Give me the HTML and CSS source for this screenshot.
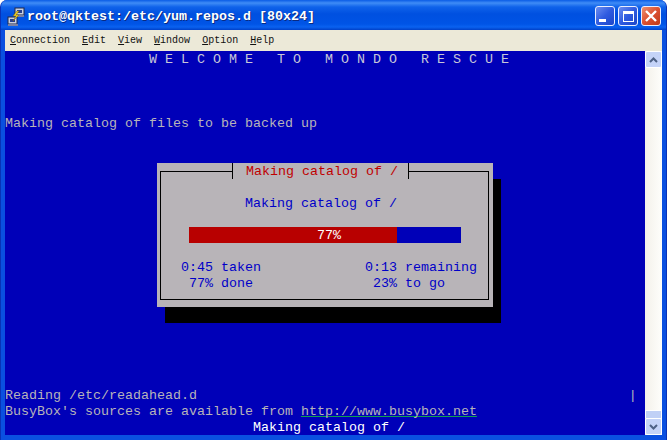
FILE: index.html
```html
<!DOCTYPE html>
<html lang="en">
<head>
<meta charset="utf-8">
<title>root@qktest:/etc/yum.repos.d [80x24]</title>
<link rel="stylesheet" href="styles.css">
</head>
<body>
<div class="window">
  <header class="titlebar">
    <svg class="app-icon" width="20" height="20" viewBox="0 0 20 20">
      <rect x="9" y="1" width="9" height="7" fill="#c8d0e0" stroke="#20284a"/>
      <rect x="11" y="3" width="5" height="3" fill="#28408c"/>
      <rect x="10" y="8" width="8" height="2" fill="#7a80a0"/>
      <rect x="2" y="10" width="9" height="7" fill="#c8d0e0" stroke="#20284a"/>
      <rect x="4" y="12" width="5" height="3" fill="#28408c"/>
      <rect x="2" y="17" width="10" height="2" fill="#7a80a0"/>
      <path d="M11 4 L7 9 L10 9 L7 14 L13 8 L10 8 L13 4 Z" fill="#f4d820" stroke="#806010" stroke-width="0.5"/>
    </svg>
    <span class="title">root@qktest:/etc/yum.repos.d [80x24]</span>
    <div class="controls">
      <div class="ctl"><span class="glyph-min"></span></div>
      <div class="ctl"><span class="glyph-max"></span></div>
      <div class="ctl ctl-close">
        <svg width="14" height="14" viewBox="0 0 14 14"><path d="M2 2 L12 12 M12 2 L2 12" stroke="#fff" stroke-width="2.4"/></svg>
      </div>
    </div>
  </header>
  <nav class="menubar">
    <span class="menu"><u>C</u>onnection</span>
    <span class="menu"><u>E</u>dit</span>
    <span class="menu"><u>V</u>iew</span>
    <span class="menu"><u>W</u>indow</span>
    <span class="menu"><u>O</u>ption</span>
    <span class="menu"><u>H</u>elp</span>
  </nav>
  <div class="client">
    <main class="terminal">
      <pre class="row row-head">                  W E L C O M E   T O   M O N D O   R E S C U E</pre>
      <pre class="row"> </pre>
      <pre class="row"> </pre>
      <pre class="row"> </pre>
      <pre class="row">Making catalog of files to be backed up</pre>
      <div class="spacer"></div>
      <pre class="row">Reading /etc/readahead.d                                                      |</pre>
      <pre class="row">BusyBox's sources are available from <span class="link">http://www.busybox.net</span></pre>
      <pre class="row row-status">                               Making catalog of /</pre>
      <div class="shadow"></div>
      <section class="dialog">
        <div class="frame"></div>
        <div class="title-row"><pre class="row">Making catalog of /</pre></div>
        <pre class="row"> </pre>
        <pre class="row dlg-text">           Making catalog of /</pre>
        <pre class="row"> </pre>
        <div class="bar"><div class="bar-fill" style="width:208px"></div><pre class="row bar-label">77%</pre></div>
        <pre class="row"> </pre>
        <pre class="row dlg-text">   0:45 taken             0:13 remaining</pre>
        <pre class="row dlg-text">    77% done               23% to go</pre>
      </section>
    </main>
    <aside class="scrollbar">
      <div class="sb-btn"><svg width="9" height="6" viewBox="0 0 9 6"><path d="M1 5 L4.5 1.5 L8 5" fill="none" stroke="#4d6185" stroke-width="2"/></svg></div>
      <div class="sb-track"></div>
      <div class="sb-thumb"></div>
      <div class="sb-btn"><svg width="9" height="6" viewBox="0 0 9 6"><path d="M1 1 L4.5 4.5 L8 1" fill="none" stroke="#4d6185" stroke-width="2"/></svg></div>
    </aside>
  </div>
</div>
</body>
</html>
```
FILE: styles.css
```css
html, body {
  margin: 0;
  padding: 0;
  background: #fff;
}

.window {
  width: 667px;
  height: 440px;
  display: flex;
  flex-direction: column;
  box-sizing: border-box;
  overflow: hidden;
  border-radius: 7px 7px 0 0;
  background: #0a50e0;
  padding: 0 5px 5px;
  border-left: 1px solid #0832b8;
  border-right: 1px solid #0832b8;
}

.titlebar {
  height: 30px;
  flex: none;
  margin: 0 -5px;
  padding: 0 5px;
  display: flex;
  align-items: center;
  box-sizing: border-box;
  background: linear-gradient(180deg, #0a5ce6 0, #3f8cf6 3px, #0f62ea 7px, #0050e0 14px, #0054e6 24px, #0a62f0 27px, #0040c8 30px);
}

.app-icon {
  flex: none;
  margin-top: 3px;
}

.title {
  margin-left: 1px;
  padding-top: 3px;
  font: bold 13.33px/16px "Liberation Mono", monospace;
  color: #fff;
  text-shadow: 1px 1px 0 #0a2a80;
  white-space: pre;
}

.controls {
  margin-left: auto;
  margin-top: 2px;
  display: flex;
  gap: 3px;
}

.ctl {
  width: 20px;
  height: 20px;
  box-sizing: border-box;
  border: 1px solid #e8eeff;
  border-radius: 3px;
  background: linear-gradient(135deg, #6c8ef0 0, #2f5be0 50%, #1c45c8 100%);
  display: flex;
  align-items: center;
  justify-content: center;
}

.ctl-close {
  background: linear-gradient(135deg, #ec9070 0, #dc5030 50%, #c03a18 100%);
}

.glyph-min {
  width: 7px;
  height: 3px;
  background: #fff;
  align-self: flex-end;
  margin: 0 5px 3px 0;
}

.glyph-max {
  width: 11px;
  height: 11px;
  box-sizing: border-box;
  border: 1px solid #fff;
  border-top-width: 3px;
}

.menubar {
  height: 21px;
  flex: none;
  box-sizing: border-box;
  margin: 0 -1px;
  padding: 1px 0 0 5px;
  display: flex;
  align-items: center;
  gap: 12px;
  background: #ece9d8;
  font: 10px/14px "Liberation Mono", monospace;
  color: #111;
}

.client {
  flex: 1;
  display: flex;
  min-height: 0;
  margin: 0 -1px;
}

.terminal {
  width: 640px;
  height: 384px;
  flex: none;
  display: flex;
  flex-direction: column;
  position: relative;
  background: #0000b8;
  font: 13.33px/18px "Liberation Mono", monospace;
  color: #b8b4b8;
}

.row {
  margin: 0;
  height: 16px;
  font: inherit;
  white-space: pre;
}

.row-head {
  color: #c8c6d8;
}

.row-status {
  color: #fff;
}

.spacer {
  flex: 1;
}

.link {
  text-decoration: underline;
  text-decoration-color: #10a050;
  text-decoration-skip-ink: none;
}

.shadow {
  position: absolute;
  left: 160px;
  top: 128px;
  width: 336px;
  height: 144px;
  background: #000;
}

.dialog {
  position: absolute;
  left: 152px;
  top: 112px;
  width: 336px;
  height: 144px;
  background: #b8b4b8;
  color: #0000c8;
}

.frame {
  position: absolute;
  left: 3px;
  top: 8px;
  right: 4px;
  bottom: 7px;
  border: 1px solid #000;
}

.title-row {
  position: relative;
  box-sizing: border-box;
  width: 177px;
  height: 16px;
  margin-left: 75px;
  padding-left: 13px;
  border-left: 1px solid #000;
  border-right: 1px solid #000;
  background: #b8b4b8;
  color: #c00000;
}

.dlg-text {
  position: relative;
  color: #0000c8;
}

.bar {
  position: relative;
  width: 272px;
  height: 16px;
  margin-left: 32px;
  background: #0000b8;
  color: #fff;
}

.bar-fill {
  position: absolute;
  left: 0;
  top: 0;
  bottom: 0;
  background: #b80000;
}

.bar-label {
  position: relative;
  padding-left: 128px;
}

.scrollbar {
  width: 17px;
  height: 384px;
  flex: none;
  display: flex;
  flex-direction: column;
  background: linear-gradient(90deg, #f3f1ea, #fefefb);
}

.sb-btn {
  height: 17px;
  flex: none;
  box-sizing: border-box;
  border: 1px solid #fff;
  border-radius: 2px;
  background: #c4d3f8;
  display: flex;
  align-items: center;
  justify-content: center;
}

.sb-track {
  flex: 1;
}

.sb-thumb {
  height: 8px;
  flex: none;
  background: #c0d0f6;
  border: 1px solid #fff;
  border-bottom: 0;
  box-sizing: border-box;
}
```
